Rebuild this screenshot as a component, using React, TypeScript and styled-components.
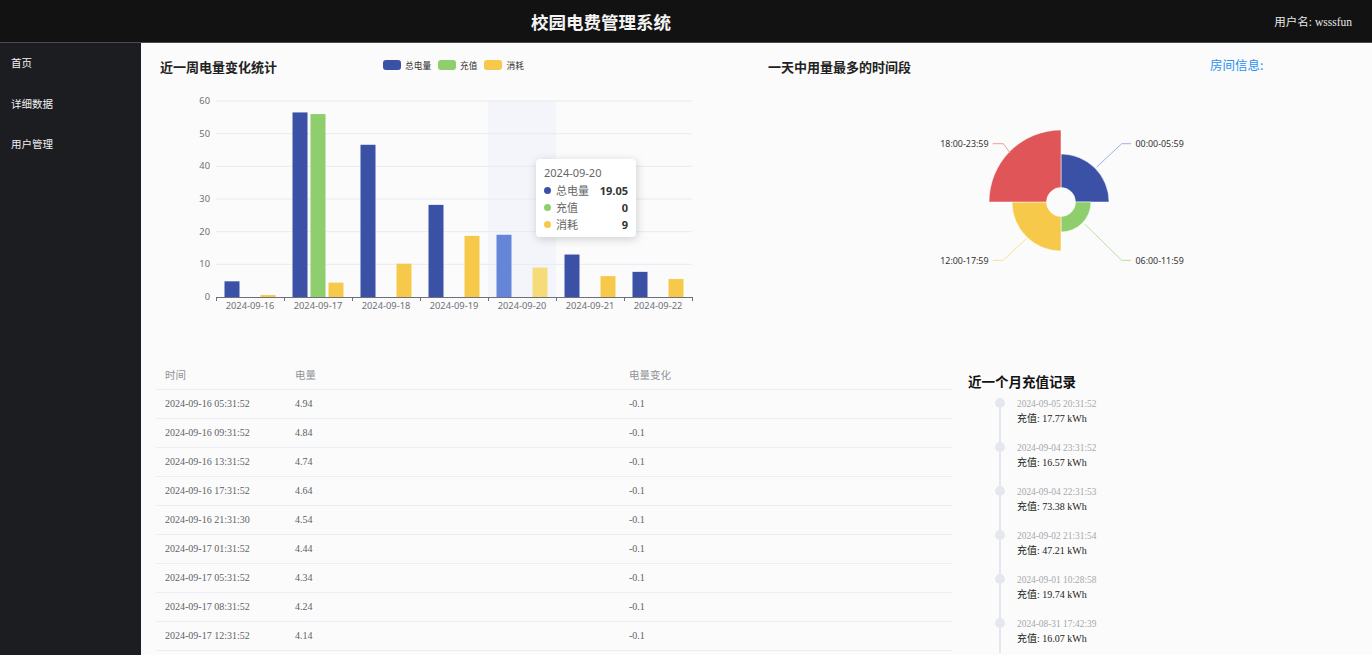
import React from 'react';
import styled, { createGlobalStyle } from 'styled-components';

const GlobalStyle = createGlobalStyle`
  html, body { margin: 0; padding: 0; }
  body {
    font-family: "Liberation Serif", "Noto Sans CJK SC", serif;
    background: #fbfbfb;
    overflow: hidden;
  }
  * { box-sizing: border-box; }
`;

const Page = styled.div`
  width: 1372px;
  height: 655px;
  display: flex;
  flex-direction: column;
  overflow: hidden;
`;

const Header = styled.header`
  flex: none;
  height: 43px;
  background: #121212;
  border-bottom: 1px solid #4b4b4b;
  display: flex;
  align-items: center;
`;

const Brand = styled.h1`
  flex: 1;
  margin: 0;
  text-align: center;
  font-family: "Noto Sans CJK SC", serif;
  font-size: 17.5px;
  font-weight: 700;
  color: #f4f4f4;
`;

const User = styled.div`
  width: 170px;
  padding-right: 20px;
  text-align: right;
  font-size: 11.5px;
  color: #e8e8e8;
`;

const Body = styled.div`
  flex: 1;
  display: flex;
  min-height: 0;
`;

const Sidebar = styled.nav`
  flex: none;
  width: 141px;
  background: #1c1d21;
  display: flex;
  flex-direction: column;
`;

const NavItem = styled.div`
  height: 40.5px;
  line-height: 40px;
  padding-left: 11px;
  font-family: "Noto Sans CJK SC", sans-serif;
  font-size: 10.5px;
  color: #f2f2f2;
`;

const Main = styled.main`
  flex: 1;
  display: flex;
  flex-direction: column;
  background: #fbfbfb;
  min-width: 0;
`;

const TopRow = styled.section`
  flex: none;
  height: 318px;
  display: flex;
`;

const BarPanel = styled.div`
  flex: none;
  width: 624px;
  position: relative;
`;

const PanelHead = styled.div`
  height: 43px;
  display: flex;
  align-items: center;
`;

const ChartTitle = styled.h2<{ $w?: number }>`
  margin: 5px 0 0;
  padding-left: ${(p) => (p.$w ? 19 : 0)}px;
  width: ${(p) => (p.$w ? `${p.$w}px` : 'auto')};
  font-family: "Noto Sans CJK SC", sans-serif;
  font-size: 13px;
  line-height: 20px;
  font-weight: 700;
  color: #222;
  white-space: nowrap;
`;

const Legend = styled.div`
  display: flex;
  align-items: center;
  gap: 7px;
  margin-top: 1px;
`;

const LegendItem = styled.div`
  display: flex;
  align-items: center;
  gap: 4px;
  font-family: "Noto Sans CJK SC", sans-serif;
  font-size: 8.7px;
  color: #333;
`;

const Swatch = styled.span<{ $c: string }>`
  width: 18px;
  height: 10px;
  border-radius: 3px;
  background: ${(p) => p.$c};
`;

const Tooltip = styled.div`
  position: absolute;
  left: 395px;
  top: 116px;
  width: 100px;
  padding: 6px 8px 4px;
  background: #fff;
  border-radius: 4px;
  box-shadow: rgba(0, 0, 0, 0.18) 1px 2px 10px;
  font-family: "Noto Sans", "Noto Sans CJK SC", sans-serif;
  font-size: 11px;
  color: #666;
`;

const TipTitle = styled.div`
  line-height: 15px;
  margin-bottom: 2px;
`;

const TipRow = styled.div`
  display: flex;
  align-items: center;
  line-height: 17px;
`;

const TipDot = styled.span<{ $c: string }>`
  width: 7px;
  height: 7px;
  border-radius: 50%;
  background: ${(p) => p.$c};
  margin-right: 5px;
`;

const TipValue = styled.b`
  margin-left: auto;
  color: #333;
  font-weight: 700;
`;

const PiePanel = styled.div`
  flex: none;
  width: 445px;
  padding-left: 3px;
`;

const RoomInfo = styled.div`
  flex: 1;
  padding: 13px 0 0 0;
  font-family: "Noto Sans CJK SC", sans-serif;
  font-size: 12.5px;
  line-height: 18px;
  color: #2a92f3;
`;

const BottomRow = styled.section`
  flex: 1;
  display: flex;
  padding-left: 15px;
  min-height: 0;
`;

const Table = styled.table`
  flex: none;
  width: 796px;
  border-collapse: collapse;
  table-layout: fixed;
  align-self: flex-start;
`;

const Th = styled.th<{ $w?: number }>`
  width: ${(p) => (p.$w ? `${p.$w}px` : 'auto')};
  height: 28px;
  padding: 0 9px;
  text-align: left;
  font-weight: 400;
  font-size: 10.5px;
  color: #909399;
  border-bottom: 1px solid #ebeef5;
`;

const Td = styled.td`
  height: 29px;
  padding: 0 9px;
  font-size: 10px;
  color: #606266;
  border-bottom: 1px solid #ebeef5;
`;

const TimelineBox = styled.div`
  flex: 1;
  margin-left: 16px;
  padding-top: 10px;
`;

const TimelineTitle = styled.h3`
  margin: 0 0 5px;
  font-family: "Noto Sans CJK SC", serif;
  font-size: 13.5px;
  line-height: 21px;
  font-weight: 700;
  color: #111;
`;

const TimelineList = styled.ul`
  list-style: none;
  margin: 0;
  padding: 0 0 0 27px;
`;

const TimelineItem = styled.li`
  display: flex;
  height: 44px;
`;

const Rail = styled.div<{ $last?: boolean }>`
  flex: none;
  width: 10px;
  position: relative;
  &::before {
    content: '';
    position: absolute;
    left: 4px;
    top: 6px;
    width: 2px;
    height: ${(p) => (p.$last ? '30px' : '44px')};
    background: #e4e7ed;
  }
  &::after {
    content: '';
    position: absolute;
    left: 0;
    top: 1px;
    width: 10px;
    height: 10px;
    border-radius: 50%;
    background: #e4e7ed;
  }
`;

const ItemBody = styled.div`
  padding-left: 12px;
`;

const Stamp = styled.div`
  font-size: 9.4px;
  line-height: 14px;
  color: #a5a7ab;
`;

const Content = styled.div`
  font-size: 10px;
  line-height: 16px;
  color: #1a1a1a;
`;

const cats = ['2024-09-16', '2024-09-17', '2024-09-18', '2024-09-19', '2024-09-20', '2024-09-21', '2024-09-22'];
const series = [
  { name: '总电量', color: '#3a51a6', hi: '#6586d8', data: [4.8, 56.5, 46.6, 28.2, 19.05, 13, 7.7] },
  { name: '充值', color: '#8fce6c', hi: '#aedc94', data: [0, 56, 0, 0, 0, 0, 0] },
  { name: '消耗', color: '#f7c94b', hi: '#f5dc78', data: [0.6, 4.4, 10.2, 18.7, 9, 6.4, 5.5] },
];

const X0 = 75;
const CW = 68;
const Y0 = 211;
const K = 196 / 60;

const BarChart: React.FC = () => (
  <svg width={624} height={240} style={{ display: 'block' }}>
    <rect x={X0 + CW * 4} y={15} width={CW} height={196} fill="#f3f5fa" />
    {[0, 10, 20, 30, 40, 50, 60].map((v) => (
      <g key={v}>
        {v > 0 && <line x1={X0} x2={X0 + CW * 7} y1={Y0 - v * K} y2={Y0 - v * K} stroke="#e6eaf2" strokeWidth={1} />}
        <text x={69} y={Y0 - v * K + 3} textAnchor="end" fontSize={9.3} fill="#6e7079" fontFamily="Noto Sans, sans-serif">
          {v}
        </text>
      </g>
    ))}
    {series.map((s, si) =>
      s.data.map((v, i) =>
        v > 0 ? (
          <rect
            key={`${si}-${i}`}
            x={X0 + CW * i + 8.5 + 18 * si}
            y={Y0 - v * K}
            width={15}
            height={v * K}
            fill={i === 4 ? s.hi : s.color}
          />
        ) : null
      )
    )}
    <line x1={X0} x2={X0 + CW * 7} y1={Y0 + 0.5} y2={Y0 + 0.5} stroke="#6e7079" strokeWidth={1} />
    {Array.from({ length: 8 }).map((_, i) => (
      <line key={i} x1={X0 + CW * i + 0.5} x2={X0 + CW * i + 0.5} y1={Y0} y2={Y0 + 4} stroke="#6e7079" strokeWidth={1} />
    ))}
    {cats.map((c, i) => (
      <text key={c} x={X0 + CW * i + CW / 2} y={223} textAnchor="middle" fontSize={9.3} fill="#6e7079" fontFamily="Noto Sans, sans-serif">
        {c}
      </text>
    ))}
  </svg>
);

function sector(cx: number, cy: number, r0: number, r1: number, a0: number, a1: number) {
  const p = (r: number, a: number) => [cx + r * Math.sin((a * Math.PI) / 180), cy - r * Math.cos((a * Math.PI) / 180)];
  const [x0, y0] = p(r1, a0);
  const [x1, y1] = p(r1, a1);
  const [x2, y2] = p(r0, a1);
  const [x3, y3] = p(r0, a0);
  return `M${x0} ${y0} A${r1} ${r1} 0 0 1 ${x1} ${y1} L${x2} ${y2} A${r0} ${r0} 0 0 0 ${x3} ${y3} Z`;
}

const CX = 293;
const CY = 116;
const pieData = [
  { label: '00:00-05:59', r: 48, a: 0, color: '#3a51a6', line: '#a0afe4', pts: '328.7,81 353.7,57.7 363,57.7', tx: 367.5, ty: 57.7, anchor: 'start' },
  { label: '06:00-11:59', r: 30, a: 90, color: '#8fce6c', line: '#b8e2a0', pts: '317,138.3 353.7,174.3 363,174.3', tx: 367.5, ty: 174.3, anchor: 'start' },
  { label: '12:00-17:59', r: 49, a: 180, color: '#f7c94b', line: '#f9df95', pts: '258.7,152.3 235.3,174.3 224.7,174.3', tx: 220.5, ty: 174.3, anchor: 'end' },
  { label: '18:00-23:59', r: 72, a: 270, color: '#e05658', line: '#f09c9c', pts: '242,66.7 235.3,57.7 224.7,57.7', tx: 220.5, ty: 57.7, anchor: 'end' },
];

const RoseChart: React.FC = () => (
  <svg width={442} height={240} style={{ display: 'block' }}>
    {pieData.map((d) => (
      <g key={d.label}>
        <path d={sector(CX, CY, 14.5, d.r, d.a, d.a + 90)} fill={d.color} stroke="#fff" strokeOpacity={0.5} strokeWidth={1} />
        <polyline points={d.pts} fill="none" stroke={d.line} strokeWidth={1} />
        <text
          x={d.tx}
          y={d.ty + 3.2}
          textAnchor={d.anchor as 'start' | 'end'}
          fontSize={8.9}
          fill="#333"
          fontFamily="Noto Sans, sans-serif"
        >
          {d.label}
        </text>
      </g>
    ))}
  </svg>
);

const rows = [
  ['2024-09-16 05:31:52', '4.94', '-0.1'],
  ['2024-09-16 09:31:52', '4.84', '-0.1'],
  ['2024-09-16 13:31:52', '4.74', '-0.1'],
  ['2024-09-16 17:31:52', '4.64', '-0.1'],
  ['2024-09-16 21:31:30', '4.54', '-0.1'],
  ['2024-09-17 01:31:52', '4.44', '-0.1'],
  ['2024-09-17 05:31:52', '4.34', '-0.1'],
  ['2024-09-17 08:31:52', '4.24', '-0.1'],
  ['2024-09-17 12:31:52', '4.14', '-0.1'],
];

const records = [
  ['2024-09-05 20:31:52', '17.77'],
  ['2024-09-04 23:31:52', '16.57'],
  ['2024-09-04 22:31:53', '73.38'],
  ['2024-09-02 21:31:54', '47.21'],
  ['2024-09-01 10:28:58', '19.74'],
  ['2024-08-31 17:42:39', '16.07'],
];

export default function App() {
  return (
    <Page>
      <GlobalStyle />
      <Header>
        <Brand>校园电费管理系统</Brand>
        <User>用户名: wsssfun</User>
      </Header>
      <Body>
        <Sidebar>
          <NavItem>首页</NavItem>
          <NavItem>详细数据</NavItem>
          <NavItem>用户管理</NavItem>
        </Sidebar>
        <Main>
          <TopRow>
            <BarPanel>
              <PanelHead>
                <ChartTitle $w={242}>近一周电量变化统计</ChartTitle>
                <Legend>
                  {series.map((s) => (
                    <LegendItem key={s.name}>
                      <Swatch $c={s.color} />
                      {s.name}
                    </LegendItem>
                  ))}
                </Legend>
              </PanelHead>
              <BarChart />
              <Tooltip>
                <TipTitle>2024-09-20</TipTitle>
                <TipRow>
                  <TipDot $c="#3a51a6" />
                  总电量
                  <TipValue>19.05</TipValue>
                </TipRow>
                <TipRow>
                  <TipDot $c="#8fce6c" />
                  充值
                  <TipValue>0</TipValue>
                </TipRow>
                <TipRow>
                  <TipDot $c="#f7c94b" />
                  消耗
                  <TipValue>9</TipValue>
                </TipRow>
              </Tooltip>
            </BarPanel>
            <PiePanel>
              <PanelHead>
                <ChartTitle>一天中用量最多的时间段</ChartTitle>
              </PanelHead>
              <RoseChart />
            </PiePanel>
            <RoomInfo>房间信息:</RoomInfo>
          </TopRow>
          <BottomRow>
            <Table>
              <thead>
                <tr>
                  <Th $w={130}>时间</Th>
                  <Th $w={334}>电量</Th>
                  <Th>电量变化</Th>
                </tr>
              </thead>
              <tbody>
                {rows.map((r) => (
                  <tr key={r[0]}>
                    <Td>{r[0]}</Td>
                    <Td>{r[1]}</Td>
                    <Td>{r[2]}</Td>
                  </tr>
                ))}
              </tbody>
            </Table>
            <TimelineBox>
              <TimelineTitle>近一个月充值记录</TimelineTitle>
              <TimelineList>
                {records.map((r, i) => (
                  <TimelineItem key={r[0]}>
                    <Rail $last={i === records.length - 1} />
                    <ItemBody>
                      <Stamp>{r[0]}</Stamp>
                      <Content>充值: {r[1]} kWh</Content>
                    </ItemBody>
                  </TimelineItem>
                ))}
              </TimelineList>
            </TimelineBox>
          </BottomRow>
        </Main>
      </Body>
    </Page>
  );
}
